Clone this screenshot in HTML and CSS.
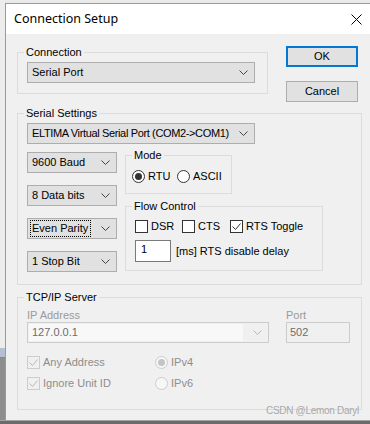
FILE: index.html
```html
<!DOCTYPE html>
<html>
<head>
<meta charset="utf-8">
<title>Connection Setup</title>
<link rel="stylesheet" href="styles.css">
</head>
<body>
<div class="screen">
  <div class="desk">
    <div class="desk-light"></div>
    <div class="desk-blue"></div>
    <div class="desk-gray"></div>
  </div>
  <div class="window">
    <div class="titlebar">
      <span class="title">Connection Setup</span>
      <svg class="close" width="11" height="11" viewBox="0 0 11 11"><path d="M0.5 0.5L10.5 10.5M10.5 0.5L0.5 10.5" stroke="#000" stroke-width="1" fill="none"/></svg>
    </div>
    <div class="client">
      <div class="top-row">
        <fieldset class="group g-conn">
          <legend>Connection</legend>
          <div class="conn-inner">
            <div class="combo w-wide"><span>Serial Port</span><svg class="chev" width="9" height="5" viewBox="0 0 9 5"><path d="M0.5 0.5L4.5 4.5L8.5 0.5" stroke="#444" fill="none"/></svg></div>
          </div>
        </fieldset>
        <div class="buttons">
          <div class="btn btn-default">OK</div>
          <div class="btn">Cancel</div>
        </div>
      </div>

      <fieldset class="group g-serial">
        <legend>Serial Settings</legend>
        <div class="serial-inner">
          <div class="combo w-wide"><span class="tight">ELTIMA Virtual Serial Port (COM2-&gt;COM1)</span><svg class="chev" width="9" height="5" viewBox="0 0 9 5"><path d="M0.5 0.5L4.5 4.5L8.5 0.5" stroke="#444" fill="none"/></svg></div>
          <div class="serial-row">
            <div class="combo-col">
              <div class="combo w-small"><span>9600 Baud</span><svg class="chev" width="9" height="5" viewBox="0 0 9 5"><path d="M0.5 0.5L4.5 4.5L8.5 0.5" stroke="#444" fill="none"/></svg></div>
              <div class="combo w-small"><span>8 Data bits</span><svg class="chev" width="9" height="5" viewBox="0 0 9 5"><path d="M0.5 0.5L4.5 4.5L8.5 0.5" stroke="#444" fill="none"/></svg></div>
              <div class="combo w-small"><span class="focus">Even Parity</span><svg class="chev" width="9" height="5" viewBox="0 0 9 5"><path d="M0.5 0.5L4.5 4.5L8.5 0.5" stroke="#444" fill="none"/></svg></div>
              <div class="combo w-small"><span>1 Stop Bit</span><svg class="chev" width="9" height="5" viewBox="0 0 9 5"><path d="M0.5 0.5L4.5 4.5L8.5 0.5" stroke="#444" fill="none"/></svg></div>
            </div>
            <div class="mode-col">
              <fieldset class="group g-mode">
                <legend>Mode</legend>
                <div class="mode-inner">
                  <span class="opt"><span class="radio on"></span>RTU</span>
                  <span class="opt"><span class="radio"></span>ASCII</span>
                </div>
              </fieldset>
              <fieldset class="group g-flow">
                <legend>Flow Control</legend>
                <div class="flow-inner">
                  <div class="checks">
                    <span class="opt"><span class="check"></span>DSR</span>
                    <span class="opt"><span class="check"></span>CTS</span>
                    <span class="opt"><span class="check"><svg width="11" height="11" viewBox="0 0 11 11"><path d="M1.5 5.5L4.5 8.5L9.5 2.5" stroke="#333" fill="none"/></svg></span>RTS Toggle</span>
                  </div>
                  <div class="delay">
                    <span class="edit">1</span>
                    <span>[ms] RTS disable delay</span>
                  </div>
                </div>
              </fieldset>
            </div>
          </div>
        </div>
      </fieldset>

      <fieldset class="group g-tcp">
        <legend>TCP/IP Server</legend>
        <div class="tcp-inner">
          <div class="tcp-fields">
            <div class="field">
              <span class="dlabel">IP Address</span>
              <div class="combo disabled w-ip"><span class="ip-text">127.0.0.1</span><svg class="chev" width="9" height="5" viewBox="0 0 9 5"><path d="M0.5 0.5L4.5 4.5L8.5 0.5" stroke="#b5b5b5" fill="none"/></svg></div>
            </div>
            <div class="field">
              <span class="dlabel">Port</span>
              <div class="port-box">502</div>
            </div>
          </div>
          <div class="tcp-opts">
            <span class="opt dis"><span class="check dis"><svg width="11" height="11" viewBox="0 0 11 11"><path d="M1.5 5.5L4.5 8.5L9.5 2.5" stroke="#b8b8b8" fill="none"/></svg></span>Any Address</span>
            <span class="opt dis"><span class="radio dis on"></span>IPv4</span>
            <span class="opt dis"><span class="check dis"><svg width="11" height="11" viewBox="0 0 11 11"><path d="M1.5 5.5L4.5 8.5L9.5 2.5" stroke="#b8b8b8" fill="none"/></svg></span>Ignore Unit ID</span>
            <span class="opt dis"><span class="radio dis"></span>IPv6</span>
          </div>
        </div>
      </fieldset>

      <span class="watermark">CSDN @Lemon Daryl</span>
    </div>
  </div>
</div>
<div class="desk-bottom"></div>
</body>
</html>
```

FILE: styles.css
```css
* { box-sizing: border-box; }
html, body { margin: 0; padding: 0; }
body {
  width: 370px;
  height: 424px;
  overflow: hidden;
  background: #e9e9e9;
  font-family: "Liberation Sans", Arial, sans-serif;
  font-size: 11px;
  line-height: 13px;
  color: #000;
}
.screen { display: flex; height: 420px; }
.desk { width: 5px; flex: none; display: flex; flex-direction: column; }
.desk-light { height: 348px; background: #ececec; }
.desk-blue { height: 10px; background: #b3c0d1; border-bottom: 1px solid #7d8894; }
.desk-gray { flex: 1; background: #8e8e8e; }
.desk-bottom { height: 4px; background: #6b6b6b; border-top: 1px solid #a3a3a3; }

.window {
  flex: 1;
  margin-top: 3px;
  border-left: 1px solid #9a9a9a;
  border-top: 1px solid #9a9a9a;
  background: #f0f0f0;
  display: flex;
  flex-direction: column;
  min-width: 0;
}
.titlebar {
  flex: none;
  height: 30px;
  background: #fff;
  display: flex;
  align-items: center;
  justify-content: space-between;
  padding: 0 8px;
}
.title {
  font-family: "Noto Sans", "Liberation Sans", sans-serif;
  font-size: 12.5px;
  line-height: 16px;
}
.client {
  position: relative;
  flex: 1;
  padding: 12px 0 0 11px;
}

.group {
  margin: 0;
  padding: 0;
  border: 1px solid #dcdcdc;
  min-width: 0;
}
.group legend {
  margin-left: 6px;
  padding: 0 2px;
  line-height: 13px;
  font-size: 11px;
}

.top-row { display: flex; align-items: flex-start; }
.g-conn { width: 251px; }
.conn-inner { padding: 3px 0 10px 9px; }
.buttons { margin-left: 18px; display: flex; flex-direction: column; gap: 14px; }
.btn {
  width: 72px;
  height: 21px;
  background: #e1e1e1;
  border: 1px solid #adadad;
  display: flex;
  align-items: center;
  justify-content: center;
}
.btn-default { border: 2px solid #0078d7; }

.combo {
  height: 21px;
  border: 1px solid #adadad;
  background: #e1e1e1;
  display: flex;
  align-items: center;
  justify-content: space-between;
  padding: 0 6px 0 4px;
  white-space: nowrap;
}
.chev { flex: none; }
.tight { letter-spacing: -0.36px; }
.w-wide { width: 228px; }
.w-small { width: 90px; }
.focus { outline: 1px dotted #000; outline-offset: 0; padding: 1px 2px 1px 1px; margin-left: -1px; }

.g-serial { width: 345px; margin-top: 5px; }
.serial-inner { padding: 3px 0 12px 9px; }
.serial-row { display: flex; align-items: flex-start; margin-top: 5px; }
.combo-col { display: flex; flex-direction: column; gap: 12px; padding-top: 3px; }
.mode-col { margin-left: 8px; display: flex; flex-direction: column; gap: 6px; }
.g-mode { width: 107px; }
.mode-inner { padding: 8px 0 10px 6px; display: grid; grid-template-columns: 45px auto; }
.g-flow { width: 198px; }
.flow-inner { padding: 7px 0 8px 9px; }
.checks { display: grid; grid-template-columns: 47px 48px auto; }
.delay { margin-top: 7px; display: flex; align-items: center; gap: 5px; }
.edit {
  width: 36px;
  height: 22px;
  border: 1px solid #7a7a7a;
  background: #fff;
  padding: 2px 0 0 5px;
}

.opt { display: flex; align-items: center; gap: 3px; height: 13px; white-space: nowrap; }
.radio {
  width: 13px;
  height: 13px;
  flex: none;
  border-radius: 50%;
  border: 1px solid #333;
  background: #fff;
  display: grid;
  place-items: center;
}
.radio.on::after {
  content: "";
  width: 7px;
  height: 7px;
  border-radius: 50%;
  background: #333;
}
.check {
  width: 13px;
  height: 13px;
  flex: none;
  border: 1px solid #333;
  background: #fff;
  display: grid;
  place-items: center;
}

.g-tcp { width: 345px; margin-top: 6px; }
.tcp-inner { padding: 5px 0 19px 9px; }
.tcp-fields { display: flex; gap: 17px; }
.field { display: flex; flex-direction: column; }
.dlabel { color: #9a9a9a; height: 13px; }
.w-ip { width: 242px; }
.combo.disabled {
  border-color: #cccccc;
  background: #f0f0f0;
  padding: 1px 6px 1px 1px;
}
.ip-text {
  flex: 1;
  align-self: stretch;
  display: flex;
  align-items: center;
  background: #f8f8f8;
  padding-left: 3px;
  margin-right: 10px;
  color: #6d6d6d;
}
.port-box {
  width: 64px;
  height: 21px;
  border: 1px solid #cccccc;
  background: #f0f0f0;
  color: #6d6d6d;
  padding-left: 3px;
  display: flex;
  align-items: center;
}
.tcp-opts { margin-top: 13px; display: grid; grid-template-columns: 128px auto; row-gap: 8px; }
.opt.dis { color: #8d8d8d; }
.check.dis { border-color: #cccccc; background: #f0f0f0; }
.radio.dis { border-color: #cccccc; background: #f7f7f7; }
.radio.dis.on::after { background: #c4c4c4; }

.watermark {
  position: absolute;
  left: 260px;
  top: 370px;
  font-size: 10px;
  letter-spacing: -0.3px;
  color: #a8a8a8;
}
```
